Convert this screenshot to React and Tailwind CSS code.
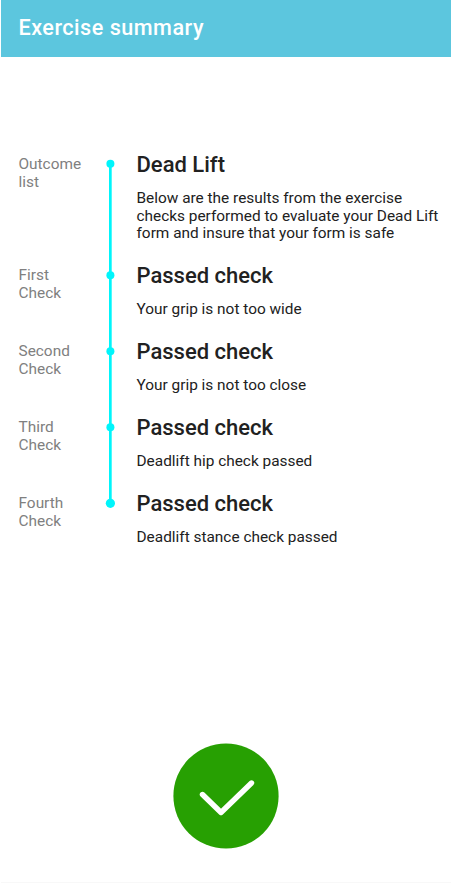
const steps = [
  { label: ["Outcome", "list"], title: "Dead Lift", lines: ["Below are the results from the exercise", "checks performed to evaluate your Dead Lift", "form and insure that your form is safe"] },
  { label: ["First", "Check"], title: "Passed check", lines: ["Your grip is not too wide"] },
  { label: ["Second", "Check"], title: "Passed check", lines: ["Your grip is not too close"] },
  { label: ["Third", "Check"], title: "Passed check", lines: ["Deadlift hip check passed"] },
  { label: ["Fourth", "Check"], title: "Passed check", lines: ["Deadlift stance check passed"] },
];

function Step({ step, first, last }) {
  return (
    <li className={first ? "flex h-[111px]" : "flex h-[76px]"}>
      <div className="w-[85.5px] pt-[4px] text-[15.4px] leading-[17.7px] text-[#808080]">
        {step.label.map((l) => (
          <div key={l}>{l}</div>
        ))}
      </div>
      <div className="relative w-[13px] shrink-0">
        <svg className="absolute left-0 top-[5px] overflow-visible" width="13" height="14" fill="#00f5fb">
          {!last && <rect x="5" y="7" width="2.7" height={first ? 111 : 76} />}
          <circle cx="6.4" cy={first ? 6.8 : 7.3} r={last ? 4.6 : 4} />
        </svg>
      </div>
      <div className="ml-[19.5px] whitespace-nowrap text-[#212121]">
        <h2 className="text-[22px] font-medium leading-[26px]">{step.title}</h2>
        <div className="mt-[12px] text-[15.4px] leading-[17.7px]">
          {step.lines.map((l) => (
            <p key={l}>{l}</p>
          ))}
        </div>
      </div>
    </li>
  );
}

export default function App() {
  return (
    <div className="flex h-[883px] flex-col bg-white font-['Roboto',sans-serif]">
      <header className="ml-px mr-[2px] flex h-[57px] items-center bg-[#5cc6de] pl-[17.5px]">
        <h1 className="text-[21.6px] font-medium tracking-[0.5px] text-white">Exercise summary</h1>
      </header>
      <ul className="mt-[95px] pl-[18.5px]">
        {steps.map((s, i) => (
          <Step key={s.label[0]} step={s} first={i === 0} last={i === steps.length - 1} />
        ))}
      </ul>
      <footer className="mt-auto ml-px mr-[2px] border-b border-[#f8f8f8] pb-[33px] pl-[172px]">
        <svg className="block" width="106" height="107" viewBox="0 0 106 107" fill="none">
          <circle cx="53" cy="54" r="52.6" fill="#27a002" />
          <path d="M29.5 51.5L48 69.5L78.5 40" transform="translate(0 1)" stroke="white" strokeWidth="5.4" strokeLinecap="round" strokeLinejoin="round" />
        </svg>
      </footer>
    </div>
  );
}
